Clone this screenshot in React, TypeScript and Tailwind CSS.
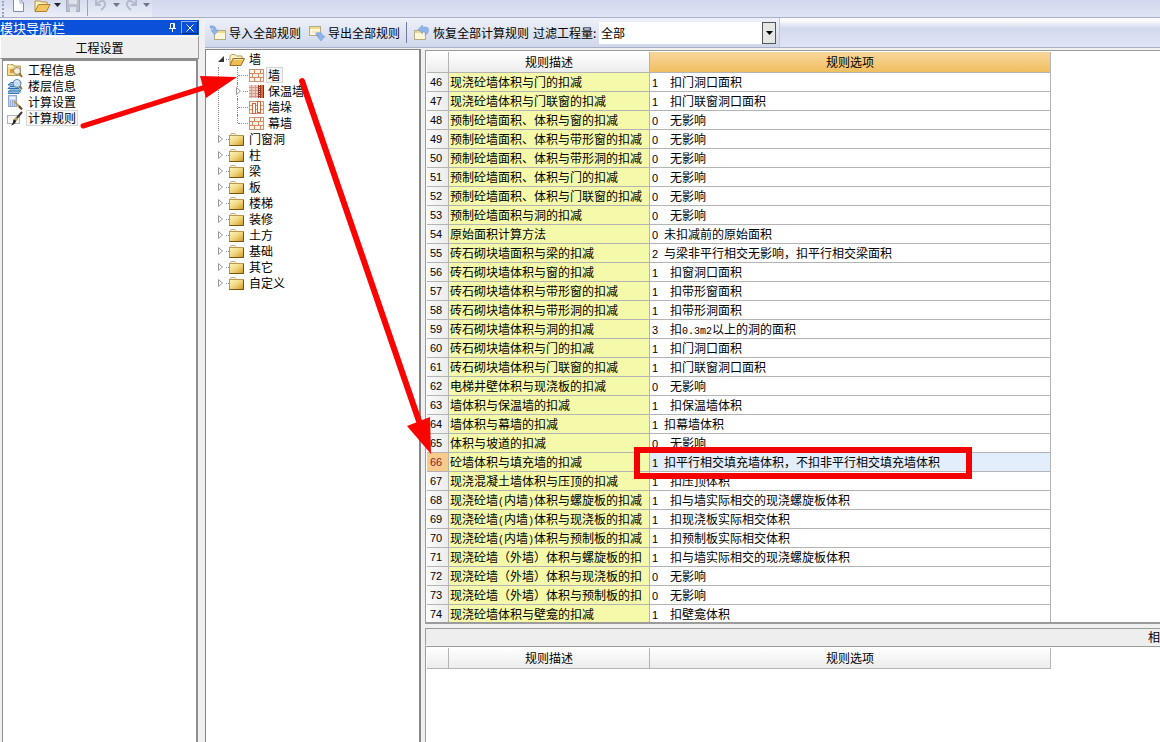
import type { ElementType, ReactNode } from "react";
import clsx from "clsx";

interface Rule {
  id: number;
  name: string;
  code: number;
  option: string;
  tight?: boolean;
}

const rules: Rule[] = [
  { id: 46, name: "现浇砼墙体积与门的扣减", code: 1, option: "扣门洞口面积" },
  { id: 47, name: "现浇砼墙体积与门联窗的扣减", code: 1, option: "扣门联窗洞口面积" },
  { id: 48, name: "预制砼墙面积、体积与窗的扣减", code: 0, option: "无影响" },
  { id: 49, name: "预制砼墙面积、体积与带形窗的扣减", code: 0, option: "无影响" },
  { id: 50, name: "预制砼墙面积、体积与带形洞的扣减", code: 0, option: "无影响" },
  { id: 51, name: "预制砼墙面积、体积与门的扣减", code: 0, option: "无影响" },
  { id: 52, name: "预制砼墙面积、体积与门联窗的扣减", code: 0, option: "无影响" },
  { id: 53, name: "预制砼墙面积与洞的扣减", code: 0, option: "无影响" },
  { id: 54, name: "原始面积计算方法", code: 0, option: "未扣减前的原始面积", tight: true },
  { id: 55, name: "砖石砌块墙面积与梁的扣减", code: 2, option: "与梁非平行相交无影响，扣平行相交梁面积", tight: true },
  { id: 56, name: "砖石砌块墙体积与窗的扣减", code: 1, option: "扣窗洞口面积" },
  { id: 57, name: "砖石砌块墙体积与带形窗的扣减", code: 1, option: "扣带形窗面积" },
  { id: 58, name: "砖石砌块墙体积与带形洞的扣减", code: 1, option: "扣带形洞面积" },
  { id: 59, name: "砖石砌块墙体积与洞的扣减", code: 3, option: "扣0.3m2以上的洞的面积" },
  { id: 60, name: "砖石砌块墙体积与门的扣减", code: 1, option: "扣门洞口面积" },
  { id: 61, name: "砖石砌块墙体积与门联窗的扣减", code: 1, option: "扣门联窗洞口面积" },
  { id: 62, name: "电梯井壁体积与现浇板的扣减", code: 0, option: "无影响" },
  { id: 63, name: "墙体积与保温墙的扣减", code: 1, option: "扣保温墙体积" },
  { id: 64, name: "墙体积与幕墙的扣减", code: 1, option: "扣幕墙体积", tight: true },
  { id: 65, name: "体积与坡道的扣减", code: 0, option: "无影响" },
  { id: 66, name: "砼墙体积与填充墙的扣减", code: 1, option: "扣平行相交填充墙体积，不扣非平行相交填充墙体积", tight: true },
  { id: 67, name: "现浇混凝土墙体积与压顶的扣减", code: 1, option: "扣压顶体积" },
  { id: 68, name: "现浇砼墙(内墙)体积与螺旋板的扣减", code: 1, option: "扣与墙实际相交的现浇螺旋板体积" },
  { id: 69, name: "现浇砼墙(内墙)体积与现浇板的扣减", code: 1, option: "扣现浇板实际相交体积" },
  { id: 70, name: "现浇砼墙(内墙)体积与预制板的扣减", code: 1, option: "扣预制板实际相交体积" },
  { id: 71, name: "现浇砼墙（外墙）体积与螺旋板的扣", code: 1, option: "扣与墙实际相交的现浇螺旋板体积" },
  { id: 72, name: "现浇砼墙（外墙）体积与现浇板的扣", code: 0, option: "无影响" },
  { id: 73, name: "现浇砼墙（外墙）体积与预制板的扣", code: 0, option: "无影响" },
  { id: 74, name: "现浇砼墙体积与壁龛的扣减", code: 1, option: "扣壁龛体积" },
];

const SELECTED_RULE = 66;

const folders = ["门窗洞", "柱", "梁", "板", "楼梯", "装修", "土方", "基础", "其它", "自定义"];

/* ---------- icons ---------- */

function FolderIcon() {
  return (
    <svg width="15" height="13" viewBox="0 0 15 13" aria-hidden="true">
      <defs>
        <linearGradient id="folder" x1="0" y1="0" x2="1" y2="1">
          <stop offset="0" stopColor="#fff6c4" />
          <stop offset="0.5" stopColor="#f2d67c" />
          <stop offset="1" stopColor="#cf9320" />
        </linearGradient>
      </defs>
      <path d="M1.5 2.500L2 0.500H6L7.500 2.500" fill="#fffbe8" stroke="#c0b084" />
      <rect x="0.5" y="2.500" width="14" height="10" fill="url(#folder)" stroke="#b8974e" />
      <path d="M0.5 12.500H14.500V3" fill="none" stroke="#74561a" />
    </svg>
  );
}

function OpenFolderIcon() {
  return (
    <svg width="16" height="13" viewBox="0 0 16 13" aria-hidden="true">
      <path d="M1 12V3L2.500 1.500H6L7.500 3H13V5.500" fill="#fff3c4" stroke="#b99a58" />
      <path d="M1 12.500L4 5.500H15.500L12 12.500Z" fill="#eebf50" stroke="#94702a" />
      <path d="M5 6.500H14" stroke="#fbe6a0" />
    </svg>
  );
}

function BrickIcon() {
  return (
    <svg width="15" height="13" viewBox="0 0 15 13" aria-hidden="true">
      <rect x="0.5" y="0.5" width="14" height="12" fill="#fff4ea" stroke="#c9937a" />
      <path d="M1 4.500H14M1 8.500H14M5.500 1V4M11.500 1V4M3.500 5V8M9.500 5V8M5.500 9V12M11.500 9V12" stroke="#d68a62" />
    </svg>
  );
}

function InsulationIcon() {
  return (
    <svg width="15" height="13" viewBox="0 0 15 13" aria-hidden="true">
      <rect width="9" height="13" fill="#f0cdbc" />
      <path d="M0 2.500H9M0 5.500H9M0 8.500H9M0 11.500H9M2.500 0V13M6.500 0V13" stroke="#cf9a90" />
      <rect x="9" width="3" height="13" fill="#8c3a2c" />
      <path d="M10.500 0V13" stroke="#f3c7a8" strokeDasharray="1 1" />
      <rect x="12" width="2" height="13" fill="#e26a2c" />
      <path d="M14.500 0V13" stroke="#7c2f20" />
    </svg>
  );
}

function PierIcon() {
  return (
    <svg width="15" height="13" viewBox="0 0 15 13" aria-hidden="true">
      <rect x="0.5" y="0.5" width="14" height="12" fill="#fff4ea" stroke="#c9937a" />
      <path d="M1 4.500H14M1 8.500H14" stroke="#dd9a76" />
      <rect x="3.500" y="2.500" width="3" height="10" fill="#fff8f0" stroke="#c4683f" />
      <rect x="8.500" y="0.500" width="3" height="11" fill="#fff8f0" stroke="#c4683f" />
    </svg>
  );
}

function ProjectInfoIcon() {
  return (
    <svg width="16" height="15" viewBox="0 0 16 15" aria-hidden="true">
      <path d="M0.500 1.500H6L7 3H13.500V12.500H0.500Z" fill="#f3dc8e" stroke="#b39a58" />
      <path d="M3 0.500V6M0.500 3.500H6" stroke="#fff6c8" />
      <rect x="3" y="6" width="5" height="4" fill="#d99a3a" />
      <circle cx="10" cy="8" r="3.500" fill="#f3eedc" stroke="#8f8a78" />
      <path d="M12.500 10.500L15 14" stroke="#a06a20" strokeWidth="2" />
    </svg>
  );
}

function FloorInfoIcon() {
  return (
    <svg width="16" height="15" viewBox="0 0 16 15" aria-hidden="true">
      <path d="M1 6L4 3.500H14L12 6Z M1 9.500L3 7.500H14L12 9.500Z M1 13L3 11H14L12 13Z" fill="#a5d2f0" stroke="#2b6fae" />
      <path d="M1 14.500H12L14 12.500" fill="none" stroke="#3a7fba" />
      <circle cx="10" cy="4.500" r="4" fill="#dcecf8" fillOpacity="0.8" stroke="#5c82a6" />
      <path d="M12.500 7.500L15 10" stroke="#96744a" strokeWidth="2" />
    </svg>
  );
}

function CalcSettingsIcon() {
  return (
    <svg width="16" height="15" viewBox="0 0 16 15" aria-hidden="true">
      <rect x="1.500" y="0.500" width="8" height="11" fill="#c6d6f0" stroke="#93a7cc" />
      <rect x="3" y="2" width="5" height="2" fill="#eaf2ff" />
      <path d="M3 6H8M3 8H8M3 10H8" stroke="#6d86b8" strokeDasharray="1 1" />
      <path d="M7 6L14 13.500" stroke="#b99a5c" strokeWidth="2" />
      <path d="M12 11L15 14.500" stroke="#5e4a26" strokeWidth="2" />
    </svg>
  );
}

function CalcRuleIcon() {
  return (
    <svg width="16" height="15" viewBox="0 0 16 15" aria-hidden="true">
      <rect x="0.5" y="4.500" width="12" height="8" fill="#f7f7f7" stroke="#b4b4b4" />
      <path d="M15 1L9.500 7.500" stroke="#3b3b3b" strokeWidth="2" />
      <path d="M10 7L7.500 10" stroke="#c0a050" strokeWidth="3" />
      <path d="M9 9.500Q9 13 4 14.500Q6.500 12 6.500 8.500Z" fill="#222" />
    </svg>
  );
}

function ImportIcon() {
  return (
    <svg width="16" height="16" viewBox="0 0 16 16" aria-hidden="true">
      <rect x="4.500" y="5.500" width="11" height="9" fill="#fdf6d8" stroke="#b3aa88" />
      <path d="M5 7H15" stroke="#f0d98a" strokeWidth="2" />
      <path d="M0 1Q6 0 6 5H8.500L4.500 10L1 5H3.500Q3.500 3 0 3Z" fill="#8fb4ea" stroke="#6a92cc" strokeWidth="0.5" />
    </svg>
  );
}

function ExportIcon() {
  return (
    <svg width="16" height="16" viewBox="0 0 16 16" aria-hidden="true">
      <rect x="0.500" y="1.500" width="11" height="9" fill="#fdf6d8" stroke="#b3aa88" />
      <path d="M1 3H11" stroke="#f0d98a" strokeWidth="2" />
      <path d="M3 7H10" stroke="#e4d8a8" />
      <path d="M7 8Q13.500 6 13.500 11H16L12 16L8 11H10.500Q10.500 10 7 10Z" fill="#8fb4ea" stroke="#6a92cc" strokeWidth="0.5" />
    </svg>
  );
}

function RestoreIcon() {
  return (
    <svg width="16" height="16" viewBox="0 0 16 16" aria-hidden="true">
      <rect x="0.500" y="5.500" width="11" height="9" fill="#fdf6d8" stroke="#b3aa88" />
      <path d="M1 7H11" stroke="#f0d98a" strokeWidth="2" />
      <path d="M4 4.500L8.500 0V2.500Q14.500 1 14.500 5Q14.500 9 11 10Q12.500 6 8.500 6.500V9Z" fill="#8fb4ea" stroke="#6a92cc" strokeWidth="0.5" />
    </svg>
  );
}

function Caret({ className }: { className: string }) {
  return (
    <svg width="7" height="4" viewBox="0 0 7 4" className={className} aria-hidden="true">
      <path d="M0 0H7L3.500 4Z" fill="currentColor" />
    </svg>
  );
}

/* ---------- shared bits ---------- */

// Latin characters take half the width of a Chinese one
function HalfWidth({ text }: { text: string }) {
  return (
    <>
      {text.split(/([\x21-\x7e]+)/).map((part, i) =>
        i % 2 ? (
          <span key={i} className="font-['Liberation_Mono',monospace] text-[10px] leading-none">{part}</span>
        ) : (
          part
        )
      )}
    </>
  );
}

function Expander() {
  return (
    <svg width="6" height="8" viewBox="0 0 6 8" aria-hidden="true">
      <path d="M0.500 0.500L4.500 4L0.500 7.500Z" fill="#fff" stroke="#989898" />
    </svg>
  );
}

/* ---------- top bar ---------- */

function TopBar() {
  return (
    <header className="flex h-[18px] shrink-0 border-b border-[#a9b0c8] bg-linear-to-b from-[#d2d8ec] to-[#dfe4f4]">
      <div className="flex w-[152px] items-start bg-linear-to-b from-[#d6dcee] to-[#eceff8]">
        <span className="ml-[2px] mt-px h-4 border-l-2 border-dotted border-[#9aa4c2]" />
        <button aria-label="新建" className="ml-[9px]">
          <svg width="12" height="12" viewBox="0 0 12 12" className="block">
            <path d="M0.500 -1V11.500H10.500V3L7 -1" fill="#fff" stroke="#7d8db0" />
            <path d="M7 0V3H10" fill="none" stroke="#9aa8c6" />
          </svg>
        </button>
        <button aria-label="打开" className="ml-[9px] flex items-start">
          <svg width="17" height="12" viewBox="0 0 17 12" className="block">
            <path d="M1 11V1H6L8 2H13V4" fill="#fdf0bc" stroke="#b89040" />
            <path d="M1 11.500L4.500 4.500H16L12.500 11.500Z" fill="#f3c55c" stroke="#a9822e" />
          </svg>
          <Caret className="ml-[3px] mt-[3px] text-[#22262e]" />
        </button>
        <button aria-label="保存" disabled className="ml-[5px]">
          <svg width="14" height="12" viewBox="0 0 14 12" className="block">
            <path d="M0.500 0V11.500H13.500V0" fill="#b9bfce" stroke="#a4abbd" />
            <path d="M3 0H11V4H3Z M4 7H10V12H4Z" fill="#dde1ea" />
          </svg>
        </button>
        <span className="ml-[7px] h-4 w-px bg-[#98a2bd]" />
        <button aria-label="撤销" disabled className="ml-[7px] flex items-start">
          <svg width="12" height="11" viewBox="0 0 12 11" className="block">
            <path d="M1 0V5H6M2 4Q8 -2 10 3Q11 6 6 10" fill="none" stroke="#b2bace" strokeWidth="2" />
          </svg>
          <Caret className="ml-[6px] mt-[3px] text-[#6d7588]" />
        </button>
        <button aria-label="重做" disabled className="ml-[5px] flex items-start">
          <svg width="12" height="11" viewBox="0 0 12 11" className="block">
            <path d="M11 0V5H6M10 4Q4 -2 2 3Q1 6 6 10" fill="none" stroke="#b2bace" strokeWidth="2" />
          </svg>
          <Caret className="ml-[6px] mt-[3px] text-[#6d7588]" />
        </button>
      </div>
    </header>
  );
}

/* ---------- module sidebar ---------- */

const modules: { label: string; icon: ElementType; active?: boolean }[] = [
  { label: "工程信息", icon: ProjectInfoIcon },
  { label: "楼层信息", icon: FloorInfoIcon },
  { label: "计算设置", icon: CalcSettingsIcon },
  { label: "计算规则", icon: CalcRuleIcon, active: true },
];

function Sidebar() {
  return (
    <aside className="flex w-[199px] shrink-0 flex-col pt-[2px]">
      <div className="flex h-[15px] items-center bg-[#0a50d8] text-[13px] leading-[15px] text-white">
        <h2 className="flex-1">模块导航栏</h2>
        <button aria-label="固定" className="mr-[5px]">
          <svg width="7" height="9" viewBox="0 0 7 9" className="block">
            <path d="M1.500 0.500H5.500V5M1.500 0.500V5M4.500 0V5M0 5.500H7M3.500 6V9" fill="none" stroke="#fff" />
          </svg>
        </button>
        <button aria-label="关闭" className="mr-px flex h-[13px] w-[17px] items-center justify-center border border-[#8fb2f0] border-b-[#06286e] border-r-[#06286e]">
          <svg width="8" height="8" viewBox="0 0 8 8">
            <path d="M0.500 0.500L7.500 7.500M7.500 0.500L0.500 7.500" stroke="#fff" />
          </svg>
        </button>
      </div>
      <button className="mt-px h-[23px] border border-b-[#8a8a8a] border-l-white border-r-[#9a9a9a] border-t-white bg-[#efefef] text-center leading-[21px]">
        工程设置
      </button>
      <nav className="ml-[2px] mr-px min-h-0 flex-1 border-l border-r-2 border-t-2 border-[#8e8e8e] bg-white pt-px">
        {modules.map(({ label, icon: Icon, active }) => (
          <a key={label} href="#" className="flex h-4 items-center pl-[4px]">
            <Icon />
            <span className={clsx("ml-[3px] h-4 border px-px leading-[14px]", active ? "border-[#d8d8d8] bg-[#f6f6f6]" : "border-transparent")}>
              {label}
            </span>
          </a>
        ))}
      </nav>
    </aside>
  );
}

/* ---------- rule toolbar ---------- */

function RuleToolbar() {
  return (
    <div className="flex h-[30px] shrink-0 border-b border-[#a9b0c8] bg-linear-to-b from-[#fbfbfd] from-10% via-[#d3d9ed] via-35% to-[#e0e5f5]">
      <div className="flex items-center border-r border-[#c0c7dc] bg-linear-to-b from-[#eef1f9] to-[#cfd7eb] pl-[5px] pr-[3px]">
        <button className="flex items-center gap-[3px]">
          <ImportIcon />
          导入全部规则
        </button>
        <button className="ml-[8px] flex items-center gap-[3px]">
          <ExportIcon />
          导出全部规则
        </button>
        <span className="ml-[6px] h-[21px] w-px bg-[#6e7c9e]" />
        <button className="ml-[7px] flex items-center gap-[3px]">
          <RestoreIcon />
          恢复全部计算规则
        </button>
        <label htmlFor="quantity" className="ml-[4px] w-[66px]">过滤工程量:</label>
        <div className="relative">
          <select id="quantity" className="block h-[22px] w-[177px] appearance-none bg-white pl-[2px] leading-[22px] outline-none">
            <option>全部</option>
          </select>
          <span className="pointer-events-none absolute inset-y-0 right-0 flex w-[14px] items-center justify-center border border-[#555] bg-[#e6e6e6]">
            <Caret className="text-black" />
          </span>
        </div>
      </div>
    </div>
  );
}

/* ---------- component tree ---------- */

function TreeChild({ label, icon, active, expandable, last }: { label: string; icon: ReactNode; active?: boolean; expandable?: boolean; last?: boolean }) {
  return (
    <li className="flex h-4 items-center">
      <span className={clsx("w-px self-start border-l border-dotted border-[#8a8a8a]", last ? "h-2" : "h-4")} />
      {expandable && <span className="-ml-[2px] bg-white"><Expander /></span>}
      <span className={clsx("mr-px border-t border-dotted border-[#8a8a8a]", expandable ? "ml-px w-[5px]" : "w-[10px]")} />
      {icon}
      <span className={clsx("ml-[2px] h-4 border px-px leading-[14px]", active ? "border-[#d4d4d4] bg-[#f4f4f4] pr-[2px]" : "border-transparent")}>{label}</span>
    </li>
  );
}

function ComponentTree() {
  return (
    <div className="mt-px w-[216px] shrink-0 border-l border-r-2 border-t border-[#868686] bg-white pt-px">
      <ul className="pl-[12px]">
        <li>
          <div className="flex h-4 items-center">
            <svg width="7" height="7" viewBox="0 0 7 7" aria-hidden="true">
              <path d="M6 0V6H0Z" fill="#333" />
            </svg>
            <span className="ml-px w-[3px] border-t border-dotted border-[#8a8a8a]" />
            <OpenFolderIcon />
            <span className="ml-[4px]">墙</span>
          </div>
          <ul className="border-l border-dotted border-[#8a8a8a] pl-[18px]">
            <TreeChild label="墙" icon={<BrickIcon />} active />
            <TreeChild label="保温墙" icon={<InsulationIcon />} expandable />
            <TreeChild label="墙垛" icon={<PierIcon />} />
            <TreeChild label="幕墙" icon={<BrickIcon />} last />
          </ul>
        </li>
        {folders.map((name) => (
          <li key={name} className="flex h-4 items-center">
            <Expander />
            <span className="ml-[2px] w-[3px] border-t border-dotted border-[#8a8a8a]" />
            <FolderIcon />
            <span className="ml-[5px]">{name}</span>
          </li>
        ))}
      </ul>
    </div>
  );
}

/* ---------- rule tables ---------- */

function RuleTable({ rows, highlight }: { rows: Rule[]; highlight?: boolean }) {
  const head = "border-b border-r border-[#b4b4b4] p-0 font-normal";
  const plain = "bg-linear-to-b from-white to-[#ececec]";
  return (
    <table className="w-[624px] table-fixed border-separate border-spacing-0 leading-4">
      <colgroup>
        <col className="w-[22px]" />
        <col className="w-[201px]" />
        <col />
      </colgroup>
      <thead>
        <tr className="h-[21px]">
          <th className={clsx(head, plain)} aria-label="序号" />
          <th className={clsx(head, plain)}>规则描述</th>
          <th className={clsx(head, highlight ? "bg-linear-to-b from-[#f8d79c] to-[#f0be5e]" : plain)}>规则选项</th>
        </tr>
      </thead>
      <tbody>
        {rows.map((rule) => {
          const selected = rule.id === SELECTED_RULE;
          // the last row runs into the frame and has no line of its own
          const cell = "h-[19px] overflow-hidden whitespace-nowrap border-b border-r border-[#b4b4b4] p-0 group-last:h-[17px] group-last:border-b-0";
          return (
            <tr key={rule.id} className="group">
              <td
                className={clsx(
                  cell,
                  "pl-[3px] font-['Liberation_Sans',sans-serif] text-[11px]",
                  selected ? "bg-[#f9cb8a] text-[#8a1a3a]" : "bg-linear-to-r from-[#fbfbfb] to-[#ececec]"
                )}
              >
                {rule.id}
              </td>
              <td className={clsx(cell, "bg-[#f5faaa] pl-px")}>
                <HalfWidth text={rule.name} />
              </td>
              <td className={clsx(cell, "pl-[2px]", selected && "bg-[#e2eefb]")}>
                <span className={clsx("inline-block font-['Liberation_Sans',sans-serif] text-[11px] leading-none", rule.tight ? "w-3" : "w-[18px]")}>
                  {rule.code}
                </span>
                <HalfWidth text={rule.option} />
              </td>
            </tr>
          );
        })}
      </tbody>
    </table>
  );
}

// red arrows and frame that point out the steps
function Annotations() {
  return (
    <svg className="pointer-events-none absolute left-0 top-0" width="1160" height="742" viewBox="0 0 1160 742" aria-hidden="true">
      <g fill="#fb0300" stroke="#fb0300">
        <path d="M83 126L206 87" strokeWidth="5" strokeLinecap="round" />
        <path d="M237 77L200 76L206 98Z" stroke="none" />
        <path d="M302 81L420 424" strokeWidth="6" strokeLinecap="round" />
        <path d="M431 454L407 426L430 417Z" stroke="none" />
      </g>
      <rect x="637" y="450" width="332" height="26" fill="none" stroke="#f50000" strokeWidth="6" />
    </svg>
  );
}

export default function App() {
  return (
    <div className="relative flex h-screen flex-col overflow-hidden bg-[#f0f0f0] font-['Noto_Sans_CJK_SC',sans-serif] text-[12px] leading-4 text-black">
      <TopBar />
      <div className="flex min-h-0 flex-1">
        <Sidebar />
        <main className="ml-[6px] flex min-w-0 flex-1 flex-col">
          <RuleToolbar />
          <div className="flex min-h-0 flex-1">
            <ComponentTree />
            <div className="ml-[4px] mt-[2px] flex min-w-0 flex-1 flex-col">
              <section className="shrink-0 border-b-2 border-l border-t border-[#9c9c9c] bg-white pl-px pt-px">
                <RuleTable rows={rules} highlight />
              </section>
              <div className="mt-[4px] flex h-[17px] shrink-0 justify-end border-l border-t border-[#9c9c9c] bg-[#eeeeee]">
                <h3>相</h3>
              </div>
              <section className="mt-px min-h-0 flex-1 border-l border-t border-[#9c9c9c] bg-white pl-px pt-px">
                <RuleTable rows={[]} />
              </section>
            </div>
          </div>
        </main>
      </div>
      <Annotations />
    </div>
  );
}
